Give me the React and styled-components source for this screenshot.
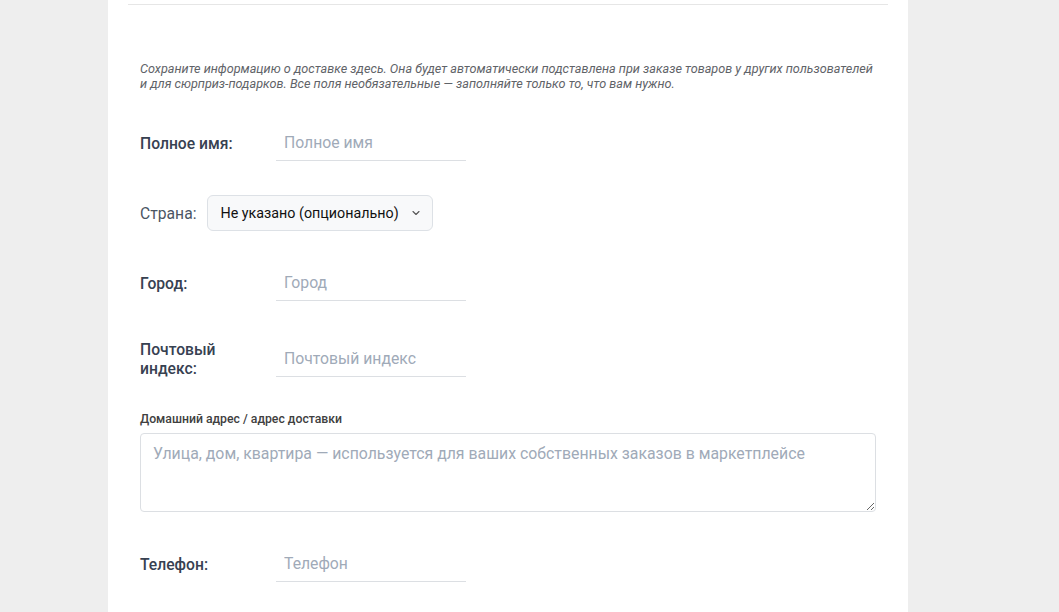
import React from 'react';
import styled, { createGlobalStyle } from 'styled-components';

const GlobalStyle = createGlobalStyle`
  html, body {
    margin: 0;
    padding: 0;
    background: #eeeeee;
    font-family: Roboto, "Noto Sans", Arial, sans-serif;
  }
`;

const Page = styled.div`
  display: flex;
  padding-left: 108px;
  min-height: 612px;
`;

const Card = styled.section`
  width: 800px;
  background: #ffffff;
  box-sizing: border-box;
  padding: 0 32px 40px;
`;

const TopRule = styled.div`
  height: 4px;
  margin: 0 -12px;
  border-bottom: 1px solid #e6e6e6;
`;

const Intro = styled.p`
  margin: 56px 0 34px;
  font-size: 12.65px;
  line-height: 15px;
  font-style: italic;
  color: #5f6368;
`;

const Row = styled.div`
  display: flex;
  align-items: center;
  gap: ${(p) => (p.$inline ? '11px' : '0')};
  padding-top: ${(p) => (p.$tall ? '5px' : '0')};
  margin-bottom: 34px;
`;

const Label = styled.label`
  width: ${(p) => (p.$inline ? 'auto' : '120px')};
  margin-right: ${(p) => (p.$inline ? '0' : '16px')};
  flex-shrink: 0;
  font-size: 15.7px;
  line-height: 19px;
  font-weight: ${(p) => (p.$inline ? 400 : 500)};
  color: ${(p) => (p.$inline ? '#4b5563' : '#374151')};
`;

const LineInput = styled.input`
  width: 190px;
  height: 36px;
  box-sizing: border-box;
  padding: 0 8px;
  border: none;
  border-bottom: 1px solid #dcdfe3;
  outline: none;
  font-family: inherit;
  font-size: 15.75px;
  color: #222;
  background: transparent;
  &::placeholder {
    color: #a0aab8;
  }
`;

const SelectBox = styled.button`
  display: flex;
  align-items: center;
  justify-content: space-between;
  width: 226px;
  height: 36px;
  box-sizing: border-box;
  padding: 0 11px 0 12px;
  border: 1px solid #dde1e6;
  border-radius: 6px;
  background: #f8f9fa;
  font-family: inherit;
  font-size: 14.3px;
  color: #111;
  cursor: pointer;
`;

const SmallLabel = styled.div`
  font-size: 12.25px;
  line-height: 15px;
  font-weight: 500;
  color: #404040;
  margin-bottom: 6px;
`;

const Area = styled.textarea`
  display: block;
  width: 100%;
  height: 79px;
  box-sizing: border-box;
  padding: 10px 12px;
  border: 1px solid #dcdfe3;
  border-radius: 4px;
  font-family: inherit;
  font-size: 15.85px;
  line-height: 20px;
  outline: none;
  resize: vertical;
  &::placeholder {
    color: #a0aab8;
  }
`;

const Block = styled.div`
  margin-bottom: 34px;
`;

const Chevron = () => (
  <svg width="10" height="10" viewBox="0 0 10 10" fill="none">
    <path d="M2 3.5 L5 6.5 L8 3.5" stroke="#555" strokeWidth="1.1" strokeLinecap="round" strokeLinejoin="round" />
  </svg>
);

const Field = ({ label, placeholder, tall }) => (
  <Row $tall={tall}>
    <Label>{label}</Label>
    <LineInput placeholder={placeholder} />
  </Row>
);

export default function App() {
  return (
    <Page>
      <GlobalStyle />
      <Card>
        <TopRule />
        <Intro>
          Сохраните информацию о доставке здесь. Она будет автоматически подставлена при заказе товаров у других пользователей
          и для сюрприз-подарков. Все поля необязательные — заполняйте только то, что вам нужно.
        </Intro>
        <Field label="Полное имя:" placeholder="Полное имя" />
        <Row $inline>
          <Label $inline>Страна:</Label>
          <SelectBox type="button">
            <span>Не указано (опционально)</span>
            <Chevron />
          </SelectBox>
        </Row>
        <Field label="Город:" placeholder="Город" />
        <Field label="Почтовый индекс:" placeholder="Почтовый индекс" tall />
        <Block>
          <SmallLabel>Домашний адрес / адрес доставки</SmallLabel>
          <Area placeholder="Улица, дом, квартира — используется для ваших собственных заказов в маркетплейсе" />
        </Block>
        <Field label="Телефон:" placeholder="Телефон" />
      </Card>
    </Page>
  );
}
